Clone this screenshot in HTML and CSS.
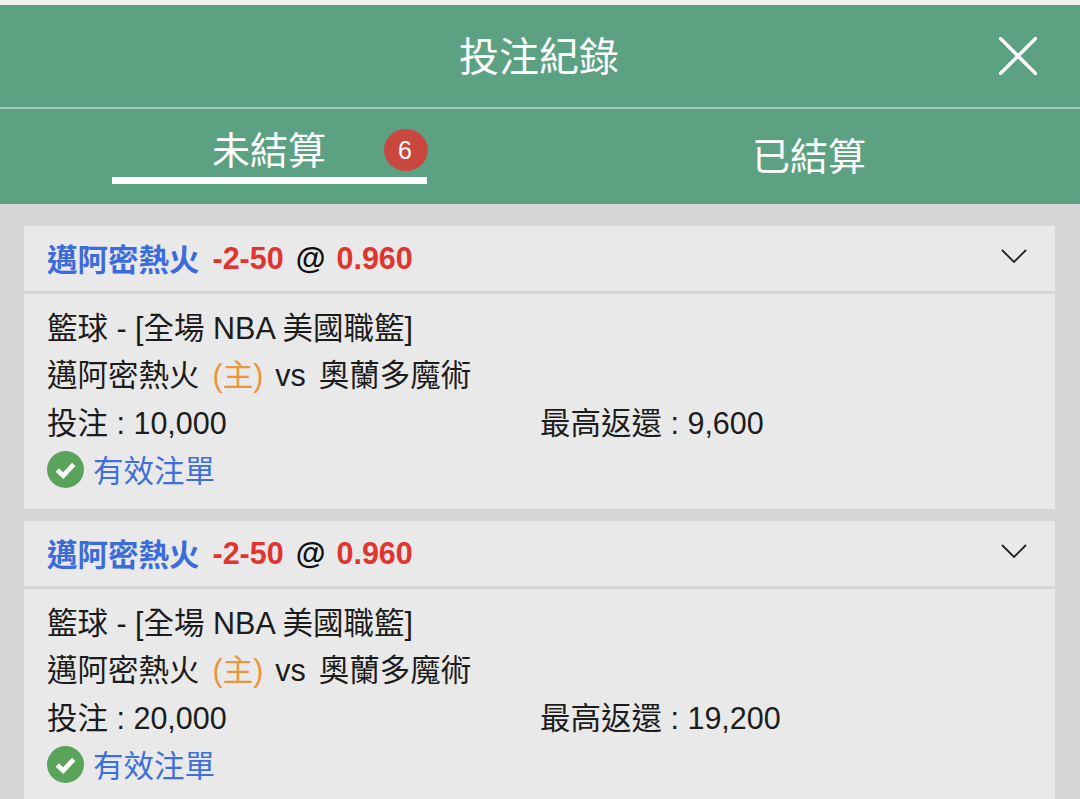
FILE: index.html
```html
<!DOCTYPE html>
<html lang="zh-Hant">
<head>
<meta charset="utf-8">
<title>投注紀錄</title>
<link rel="stylesheet" href="styles.css">
</head>
<body>
<div class="page">
  <header class="title-bar">
    <h1 class="title">投注紀錄</h1>
    <svg class="close" viewBox="0 0 38 38" width="38" height="38"><path d="M1.500 1.500 36.500 36.500M36.500 1.500 1.500 36.500" fill="none" stroke="#fff" stroke-width="3.400" stroke-linecap="round"/></svg>
  </header>
  <nav class="tabs">
    <div class="tab tab-active">
      <span class="tab-label">未結算</span>
      <span class="badge">6</span>
    </div>
    <div class="tab tab-done"><span class="tab-label">已結算</span></div>
  </nav>
  <main class="list">
    <section class="card">
      <div class="card-head">
        <div class="pick"><span class="team">邁阿密熱火</span><span class="red">-2-50</span><span class="at">@</span><span class="red">0.960</span></div>
        <svg class="chev" viewBox="0 0 26 14" width="26" height="14"><path d="M1 1 13 13 25 1" fill="none" stroke="#222" stroke-width="1.800"/></svg>
      </div>
      <div class="card-body">
        <div class="row">籃球 - [全場 NBA 美國職籃]</div>
        <div class="row">邁阿密熱火<span class="home">(主)</span>vs<span class="away">奧蘭多魔術</span></div>
        <div class="row row-split"><span class="stake">投注 : 10,000</span><span>最高返還 : 9,600</span></div>
        <div class="row status">
          <svg class="ok" viewBox="0 0 36 36" width="37" height="37"><circle cx="18" cy="18" r="18" fill="#5aa35a"/><path d="M10 18.500 15.800 24 26 13" fill="none" stroke="#fff" stroke-width="4.600"/></svg>
          <span class="valid">有效注單</span>
        </div>
      </div>
    </section>
    <section class="card">
      <div class="card-head">
        <div class="pick"><span class="team">邁阿密熱火</span><span class="red">-2-50</span><span class="at">@</span><span class="red">0.960</span></div>
        <svg class="chev" viewBox="0 0 26 14" width="26" height="14"><path d="M1 1 13 13 25 1" fill="none" stroke="#222" stroke-width="1.800"/></svg>
      </div>
      <div class="card-body">
        <div class="row">籃球 - [全場 NBA 美國職籃]</div>
        <div class="row">邁阿密熱火<span class="home">(主)</span>vs<span class="away">奧蘭多魔術</span></div>
        <div class="row row-split"><span class="stake">投注 : 20,000</span><span>最高返還 : 19,200</span></div>
        <div class="row status">
          <svg class="ok" viewBox="0 0 36 36" width="37" height="37"><circle cx="18" cy="18" r="18" fill="#5aa35a"/><path d="M10 18.500 15.800 24 26 13" fill="none" stroke="#fff" stroke-width="4.600"/></svg>
          <span class="valid">有效注單</span>
        </div>
      </div>
    </section>
  </main>
</div>
</body>
</html>
```
FILE: styles.css
```css
* { box-sizing: border-box; }
html, body { margin: 0; height: 100%; overflow: hidden; }
body {
  background: #d6d6d6;
  font-family: "Liberation Sans", "Noto Sans CJK TC", sans-serif;
  color: #1c1c1c;
}
.page { height: 799px; display: flex; flex-direction: column; padding-top: 5px; background: #d6d6d6; position: relative; }
.page::before { content: ""; position: absolute; left: 0; right: 0; top: 0; height: 5px; background: #f1f3f1; }
.title-bar {
  height: 104px;
  flex: none;
  background: #5da183;
  border-bottom: 2px solid #a5c9b7;
  display: flex;
  align-items: center;
  justify-content: center;
  padding-bottom: 4px;
  position: relative;
}
.title { margin: 0 2px 0 0; font-size: 40px; font-weight: 400; color: #fff; line-height: 1; font-family: "Noto Sans CJK TC", sans-serif; }
.close { position: absolute; right: 43px; top: 32px; }
.tabs { flex: none; height: 95px; background: #5da183; display: flex; }
.tab { width: 50%; position: relative; color: #fff; font-size: 38px; font-family: "Noto Sans CJK TC", sans-serif; line-height: 1; }
.tab-active { flex: none; width: 540px; padding-left: 212px; padding-top: 20px; }
.tab-active::after { content: ""; position: absolute; left: 112px; width: 315px; top: 68px; height: 7px; background: #fff; }
.tab-done { padding-left: 212px; padding-top: 26px; }
.badge {
  position: absolute;
  left: 384px;
  top: 20px;
  width: 44px;
  height: 42px;
  border-radius: 50%;
  background: #c9473f;
  color: #fff;
  font-family: "Liberation Sans", sans-serif;
  font-size: 25px;
  padding-right: 2px;
  display: flex;
  align-items: center;
  justify-content: center;
}
.list { padding: 22px 25px 0 24px; display: flex; flex-direction: column; gap: 12px; }
.card { background: #e9e9e9; }
.card-head {
  height: 68px;
  border-bottom: 3px solid #d6d6d6;
  padding: 0 28px 0 23px;
  display: flex;
  align-items: center;
  justify-content: space-between;
}
.pick { display: flex; align-items: center; font-size: 30.500px; font-weight: 700; line-height: 1; }
.team { color: #3c6cdc; margin-right: 13px; font-family: "Noto Sans CJK TC", sans-serif; }
.red { color: #e0352f; }
.at { color: #111; margin: 0 11px 0 12px; }
.chev { margin-bottom: 6px; }
.card-body { padding: 11px 23px 14px; font-size: 30.500px; height: 215px; }
.row { height: 47.300px; line-height: 47px; white-space: nowrap; }
.home { color: #e8963e; margin: 0 12px 0 13px; }
.away { margin-left: 13px; }
.row-split { display: flex; }
.stake { width: 493px; }
.status { display: flex; align-items: center; gap: 10px; margin-top: -1px; }
.valid { color: #3f6fd8; font-family: "Noto Sans CJK TC", sans-serif; margin-left: -1px; }
```
